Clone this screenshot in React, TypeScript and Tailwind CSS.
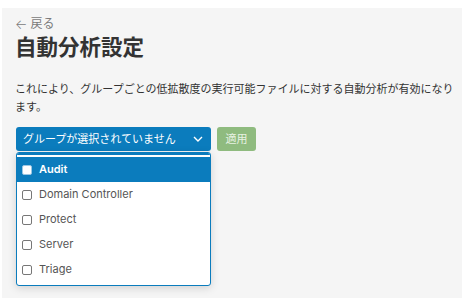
const groups = ['Audit', 'Domain Controller', 'Protect', 'Server', 'Triage'];

export default function App() {
  return (
    <div
      className="w-[467px] h-[306px] bg-white pl-[2px] pt-[8px]"
      style={{ fontFamily: "Inter, 'Noto Sans CJK JP', sans-serif" }}
    >
      <div className="w-[460px] h-[290px] bg-[#f5f5f5] pl-[13px] pr-[4px]">
        <div className="pt-[9px] flex items-center gap-[3px] text-[12px] leading-[14px] text-[#7a7a7a]">
          <span className="text-[13px] font-light">←</span>
          <span>戻る</span>
        </div>
        <h1 className="mt-[3px] text-[21.5px] leading-[26px] font-bold text-[#333]">自動分析設定</h1>
        <p className="mt-[20px] text-[11px] leading-[18px] text-[#333] w-[444px]">
          これにより、グループごとの低拡散度の実行可能ファイルに対する自動分析が有効になります。
        </p>
        <div className="mt-[11px] flex items-start gap-[6px] pl-[1px]">
          <div className="w-[195px]">
            <button className="w-full h-[24px] rounded-[3px] bg-[#0b7cbd] text-white text-[11px] flex items-center justify-between pl-[7px] pr-[8px]">
              <span>グループが選択されていません</span>
              <svg width="10" height="6" viewBox="0 0 10 6" fill="none" stroke="white" strokeWidth="1.4">
                <path d="M1 1l4 4 4-4" />
              </svg>
            </button>
            <div className="mt-[1px] rounded-[3px] border-[1.5px] border-[#0b7cbd] bg-white shadow-[0_2px_8px_rgba(0,0,0,0.15)] overflow-hidden">
              <div className="h-[2px] bg-[#0b7cbd]" />
              <div className="h-[2px] bg-white" />
              {groups.map((g, i) => (
                <div
                  key={g}
                  className={`h-[25px] flex items-center gap-[7px] pl-[5px] text-[11px] ${
                    i === 0 ? 'bg-[#0b7cbd] text-white font-semibold' : 'text-[#555]'
                  }`}
                >
                  <span
                    className={`w-[10px] h-[10px] rounded-[2px] border ${
                      i === 0 ? 'bg-white border-[#9cc6e2] border-[1.5px]' : 'border-[#777] bg-white'
                    }`}
                  />
                  <span>{g}</span>
                </div>
              ))}
              <div className="h-[3px]" />
            </div>
          </div>
          <button className="h-[24px] w-[39px] rounded-[3px] bg-[#8fbb7f] text-[#e8f2e3] text-[11px]">適用</button>
        </div>
      </div>
    </div>
  );
}
